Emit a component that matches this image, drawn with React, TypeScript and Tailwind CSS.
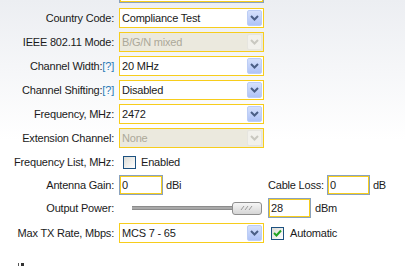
import React from "react";

const YELLOW = "border-[#f7cd1c]";

function Chevron({ disabled }: { disabled?: boolean }) {
  return (
    <svg width="9" height="6" viewBox="0 0 9 6">
      <path
        d="M1 1 L4.5 4.5 L8 1"
        fill="none"
        stroke={disabled ? "#c9c8c0" : "#4b5f86"}
        strokeWidth="2"
      />
    </svg>
  );
}

function Select({ value, disabled }: { value: string; disabled?: boolean }) {
  return (
    <div
      className={`flex h-[20px] w-[145px] items-center border ${YELLOW} ${
        disabled ? "bg-[#ebe9de] text-[#aca899]" : "bg-white text-[#1a1a1a]"
      }`}
    >
      <span className="flex-1 truncate pl-[2px]">{value}</span>
      <span
        className={`mr-[1px] flex h-[16px] w-[15px] items-center justify-center rounded-[2px] border ${
          disabled
            ? "border-[#e6e5df] bg-[#f2f1ec]"
            : "border-[#bccdf5] bg-gradient-to-b from-[#d6e1fc] to-[#afc3f7]"
        }`}
      >
        <Chevron disabled={disabled} />
      </span>
    </div>
  );
}

function TextInput({ value, w }: { value: string; w: string }) {
  return (
    <div className={`h-[20px] ${w} border border-[#8aa2bd]`}>
      <div className={`flex h-full items-center border ${YELLOW} bg-white pl-[1px] text-[#1a1a1a]`}>
        {value}
      </div>
    </div>
  );
}

function Checkbox({ checked }: { checked?: boolean }) {
  return (
    <span className="flex h-[13px] w-[13px] items-center justify-center border border-[#1c5180] bg-gradient-to-br from-[#dcdcd6] to-white">
      {checked && (
        <svg width="9" height="8" viewBox="0 0 9 8">
          <path d="M1 4 L3.5 6.5 L8 1.5" fill="none" stroke="#22a422" strokeWidth="2" />
        </svg>
      )}
    </span>
  );
}

function Help() {
  return <span className="text-[#2a7ab8]">[?]</span>;
}

function Label({ children }: { children: React.ReactNode }) {
  return <div className="whitespace-nowrap pr-[5px] text-right">{children}</div>;
}

export default function App() {
  return (
    <div className="h-[266px] w-[405px] overflow-hidden bg-[linear-gradient(to_bottom,#eceef2,#ffffff_140px)] font-['Liberation_Sans',Arial,sans-serif] text-[11px] tracking-[-0.2px] text-[#1a1a1a]">
      <div className="grid grid-cols-[119px_149px_1fr] items-center">
        <div className="h-[6px]" />
        <div className="h-[6px]">
          <div className="h-[3px] w-[145px] border-x border-b border-[#8aa2bd]">
            <div className={`h-full border-x border-b ${YELLOW} bg-white`} />
          </div>
        </div>
        <div className="h-[6px]" />

        <Label>Country Code:</Label>
        <div className="flex h-[24px] items-center">
          <Select value="Compliance Test" />
        </div>
        <div />

        <Label>IEEE 802.11 Mode:</Label>
        <div className="flex h-[24px] items-center">
          <Select value="B/G/N mixed" disabled />
        </div>
        <div />

        <Label>
          Channel Width:<Help />
        </Label>
        <div className="flex h-[24px] items-center">
          <Select value="20 MHz" />
        </div>
        <div />

        <Label>
          Channel Shifting:<Help />
        </Label>
        <div className="flex h-[24px] items-center">
          <Select value="Disabled" />
        </div>
        <div />

        <Label>Frequency, MHz:</Label>
        <div className="flex h-[24px] items-center">
          <Select value="2472" />
        </div>
        <div />

        <Label>Extension Channel:</Label>
        <div className="flex h-[24px] items-center">
          <Select value="None" disabled />
        </div>
        <div />

        <Label>Frequency List, MHz:</Label>
        <div className="flex h-[24px] items-center gap-[5px] pl-[4px]">
          <Checkbox />
          <span>Enabled</span>
        </div>
        <div />

        <Label>Antenna Gain:</Label>
        <div className="flex h-[22px] items-center gap-[3px]">
          <TextInput value="0" w="w-[44px]" />
          <span>dBi</span>
        </div>
        <div className="flex h-[22px] items-center">
          <span className="mr-[3px]">Cable Loss:</span>
          <TextInput value="0" w="w-[43px]" />
          <span className="ml-[3px]">dB</span>
        </div>

        <Label>Output Power:</Label>
        <div className="flex h-[24px] items-center pl-[13px]">
          <div className="h-[4px] w-[100px] border-y border-[#8c8c8c] bg-[#a9a9a9]" />
          <div className="flex h-[13px] w-[30px] items-center justify-center rounded-[3px] border border-[#8e8e8e] bg-gradient-to-b from-[#f6f6f6] to-[#d6d6d6]">
            <svg width="14" height="6" viewBox="0 0 14 6">
              <path d="M1 5 L4 1 M5 5 L8 1 M9 5 L12 1" stroke="#9a9a9a" strokeWidth="1" fill="none" />
            </svg>
          </div>
        </div>
        <div className="flex h-[24px] items-center">
          <TextInput value="28" w="w-[43px]" />
          <span className="ml-[4px]">dBm</span>
        </div>

        <Label>Max TX Rate, Mbps:</Label>
        <div className="flex h-[26px] items-center">
          <Select value="MCS 7 - 65" />
        </div>
        <div className="flex h-[26px] items-center gap-[6px] pl-[3px]">
          <Checkbox checked />
          <span>Automatic</span>
        </div>
      </div>
      <div className="mt-[17px] flex gap-[2px] pl-[18px]">
        <span className="h-[3px] w-[1px] bg-[#555]" />
        <span className="h-[3px] w-[3px] bg-[#333]" />
      </div>
    </div>
  );
}
